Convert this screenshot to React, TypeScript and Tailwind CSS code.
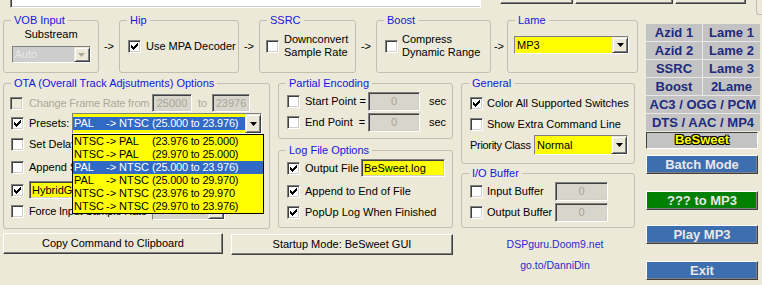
import React from "react";

const SUNKEN =
  "border border-t-[#808080] border-l-[#808080] border-b-white border-r-white shadow-[inset_1px_1px_0_#404040,inset_-1px_-1px_0_#d4d0c8]";
const RAISED =
  "border border-t-white border-l-white border-b-[#404040] border-r-[#404040] shadow-[inset_-1px_-1px_0_#808080]";
const BTN3D =
  "border border-t-[#ece9d8] border-l-[#ece9d8] border-b-[#404040] border-r-[#404040] shadow-[inset_1px_1px_0_#fff,inset_-1px_-1px_0_#808080]";

function Check({ checked = false, disabled = false }: { checked?: boolean; disabled?: boolean }) {
  return (
    <span
      className={`flex h-[13px] w-[13px] shrink-0 items-center justify-center ${SUNKEN} ${
        disabled ? "bg-[#ece9d8]" : "bg-white"
      }`}
    >
      {checked && (
        <svg width="7" height="7" viewBox="0 0 7 7" shapeRendering="crispEdges">
          <path d="M0 2L2 4L6 0H7V2L2 7L0 5Z" fill="#000" />
        </svg>
      )}
    </span>
  );
}

function DropBtn({ disabled = false }: { disabled?: boolean }) {
  return (
    <span className={`flex h-full w-[16px] shrink-0 items-center justify-center bg-[#ece9d8] ${BTN3D}`}>
      <svg width="7" height="4" viewBox="0 0 7 4">
        <path d="M0 0H7L3.5 4Z" fill={disabled ? "#aca899" : "#000"} />
      </svg>
    </span>
  );
}

function Combo({
  className,
  bg,
  disabled,
  children,
}: {
  className: string;
  bg: string;
  disabled?: boolean;
  children?: React.ReactNode;
}) {
  return (
    <div className={`flex shrink-0 ${SUNKEN} ${className}`}>
      <div className={`flex min-w-0 flex-1 items-center overflow-hidden ${bg}`}>{children}</div>
      <DropBtn disabled={disabled} />
    </div>
  );
}

function Field({ className, children }: { className: string; children?: React.ReactNode }) {
  return <div className={`flex shrink-0 items-center overflow-hidden ${SUNKEN} ${className}`}>{children}</div>;
}

function Group({ title, className, children }: { title: string; className: string; children?: React.ReactNode }) {
  return (
    <fieldset className={`shrink-0 rounded-[3px] border border-[#c2bfb0] ${className}`}>
      <legend className="ml-[7px] px-[3px] leading-[13px] text-[#1515e0]">{title}</legend>
      {children}
    </fieldset>
  );
}

function Arrow({ className }: { className: string }) {
  return <div className={`flex shrink-0 items-center justify-center pt-[5px] ${className}`}>-&gt;</div>;
}

function Preset({ a, b, c }: { a: string; b: string; c: string }) {
  return (
    <>
      <span className="inline-block w-[32px] shrink-0">{a}</span>
      <span className="inline-block w-[13px] shrink-0">-&gt;</span>
      <span className="inline-block w-[33px] shrink-0">{b}</span>
      <span className="shrink-0 tracking-[-0.2px]">{c}</span>
    </>
  );
}

const presets = [
  ["NTSC", "PAL", "(23.976 to 25.000)"],
  ["NTSC", "PAL", "(29.970 to 25.000)"],
  ["PAL", "NTSC", "(25.000 to 23.976)"],
  ["PAL", "NTSC", "(25.000 to 29.970)"],
  ["NTSC", "NTSC", "(23.976 to 29.970"],
  ["NTSC", "NTSC", "(29.970 to 23.976)"],
];

function TopStrip() {
  return (
    <div className="flex h-[14px] items-start">
      <div className="ml-[10px] h-[8px] w-[471px] border-b border-l border-r border-b-white border-l-[#808080] border-r-white bg-white shadow-[inset_1px_0_0_#404040,inset_0_-1px_0_#d4d0c8]" />
      <div className={`ml-[19px] h-[4px] w-[73px] border-t-0 bg-[#ece9d8] ${RAISED}`} />
      <div className={`ml-[2px] h-[4px] w-[98px] border-t-0 bg-[#ece9d8] ${RAISED}`} />
      <div className={`ml-[2px] h-[4px] w-[71px] border-t-0 bg-[#ece9d8] ${RAISED}`} />
      <div className="ml-[10px] h-[15px] w-[6px] rounded-bl-[3px] border-b border-l border-[#c2bfb0]" />
    </div>
  );
}

function TopRow() {
  return (
    <div className="flex h-[59px]">
      <Group title="VOB Input" className="ml-[3px] h-[59px] w-[96px]">
        <div className="flex flex-col items-center">
          <div className="mt-[1px]">Substream</div>
          <Combo className="mt-[5px] h-[17px] w-[79px]" bg="bg-[#cdcdcd]" disabled>
            <span className="pl-[2px] text-[#e6e6e6]">Auto</span>
          </Combo>
        </div>
      </Group>
      <Arrow className="w-[20px]" />
      <Group title="Hip" className="h-[59px] w-[120px]">
        <div className="flex h-[46px] items-center pb-[8px] pl-[8px]">
          <Check checked />
          <span className="ml-[5px]">Use MPA Decoder</span>
        </div>
      </Group>
      <Arrow className="w-[20px]" />
      <Group title="SSRC" className="h-[59px] w-[97px]">
        <div className="flex h-[46px] items-center pb-[8px] pl-[6px]">
          <Check />
          <span className="ml-[5px]">
            Downconvert
            <br />
            Sample Rate
          </span>
        </div>
      </Group>
      <Arrow className="w-[20px]" />
      <Group title="Boost" className="h-[59px] w-[115px]">
        <div className="flex h-[46px] items-center pb-[8px] pl-[8px]">
          <Check />
          <span className="ml-[4px]">
            Compress
            <br />
            Dynamic Range
          </span>
        </div>
      </Group>
      <Arrow className="w-[16px]" />
      <Group title="Lame" className="h-[59px] w-[131px]">
        <div className="pl-[6px] pt-[9px]">
          <Combo className="h-[18px] w-[115px]" bg="bg-[#ffff00]">
            <span className="pl-[2px]">MP3</span>
          </Combo>
        </div>
      </Group>
    </div>
  );
}

function OtaGroup() {
  return (
    <Group title="OTA (Overall Track Adjsutments) Options" className="ml-[3px] h-[152px] w-[267px]">
      <div className="mt-[3px] flex h-[20px] items-center pl-[6px]">
        <Check disabled />
        <span className="ml-[6px] w-[123px] shrink-0 tracking-[-0.2px] text-[#aca899]">Change Frame Rate from</span>
        <Field className="h-[18px] w-[40px] justify-center bg-[#d8d5cc] text-[#a8a69a]">25000</Field>
        <span className="ml-[6px] w-[14px] shrink-0 text-[#aca899]">to</span>
        <Field className="h-[18px] w-[38px] justify-center bg-[#d8d5cc] text-[#a8a69a]">23976</Field>
      </div>
      <div className="flex h-[21px] items-center pl-[7px]">
        <Check checked />
        <span className="ml-[5px] w-[43px] shrink-0">Presets:</span>
        <Combo className="h-[21px] w-[190px]" bg="bg-[#ffff00]">
          <div className="flex h-[13px] w-full items-center bg-[#316ac5] pl-[1px] text-white">
            <Preset a="PAL" b="NTSC" c="(25.000 to 23.976)" />
          </div>
        </Combo>
      </div>
      <div className="flex h-[20px] items-center pl-[7px]">
        <Check />
        <span className="ml-[5px]">Set Delay</span>
      </div>
      <div className="mt-[3px] flex h-[20px] items-center pl-[7px]">
        <Check />
        <span className="ml-[5px]">Append Silence</span>
      </div>
      <div className="mt-[3px] flex h-[20px] items-center pl-[7px]">
        <Check checked />
        <Field className="ml-[5px] h-[18px] w-[150px] bg-[#ffff00] pl-[2px]">HybridGUI</Field>
      </div>
      <div className="mt-[1px] flex h-[20px] items-center pl-[7px]">
        <Check />
        <span className="ml-[5px] w-[123px] shrink-0 tracking-[-0.2px]">Force Input Sample Rate</span>
        <Combo className="h-[18px] w-[73px]" bg="bg-[#d8d5cc]" disabled />
      </div>
    </Group>
  );
}

function MiddleColumn() {
  return (
    <div className="ml-[8px] flex w-[175px] shrink-0 flex-col">
      <Group title="Partial Encoding" className="h-[62px]">
        <div className="mt-[1px] flex h-[20px] items-center pl-[8px]">
          <Check />
          <span className="ml-[5px] w-[63px] shrink-0 whitespace-pre">Start Point =</span>
          <Field className="h-[19px] w-[52px] justify-center bg-[#d8d5cc] text-[#a8a69a]">0</Field>
          <span className="ml-[9px]">sec</span>
        </div>
        <div className="mt-[1px] flex h-[20px] items-center pl-[8px]">
          <Check />
          <span className="ml-[5px] w-[63px] shrink-0 whitespace-pre">End Point  =</span>
          <Field className="h-[19px] w-[52px] justify-center bg-[#d8d5cc] text-[#a8a69a]">0</Field>
          <span className="ml-[9px]">sec</span>
        </div>
      </Group>
      <Group title="Log File Options" className="mt-[5px] h-[84px]">
        <div className="mt-[1px] flex h-[20px] items-center pl-[8px]">
          <Check checked />
          <span className="ml-[5px] w-[56px] shrink-0">Output File</span>
          <Field className="h-[18px] w-[84px] bg-[#ffff00] pl-[2px]">BeSweet.log</Field>
        </div>
        <div className="mt-[3px] flex h-[20px] items-center pl-[8px]">
          <Check checked />
          <span className="ml-[5px]">Append to End of File</span>
        </div>
        <div className="mt-[1px] flex h-[20px] items-center pl-[8px]">
          <Check checked />
          <span className="ml-[5px]">PopUp Log When Finished</span>
        </div>
      </Group>
    </div>
  );
}

function RightColumn() {
  return (
    <div className="ml-[8px] flex w-[174px] shrink-0 flex-col">
      <Group title="General" className="h-[87px]">
        <div className="mt-[3px] flex h-[20px] items-center pl-[8px]">
          <Check checked />
          <span className="ml-[4px]">Color All Supported Switches</span>
        </div>
        <div className="mt-[1px] flex h-[20px] items-center pl-[8px]">
          <Check />
          <span className="ml-[4px]">Show Extra Command Line</span>
        </div>
        <div className="mt-[1px] flex h-[20px] items-center pl-[8px]">
          <span className="w-[64px] shrink-0 tracking-[-0.3px]">Priority Class</span>
          <Combo className="h-[20px] w-[94px]" bg="bg-[#ffff00]">
            <span className="pl-[2px]">Normal</span>
          </Combo>
        </div>
      </Group>
      <Group title="I/O Buffer" className="mt-[3px] h-[61px]">
        <div className="mt-[1px] flex h-[20px] items-center pl-[8px]">
          <Check />
          <span className="ml-[4px] w-[68px] shrink-0">Input Buffer</span>
          <Field className="h-[19px] w-[53px] justify-center bg-[#d8d5cc] text-[#a8a69a]">0</Field>
        </div>
        <div className="mt-[1px] flex h-[20px] items-center pl-[8px]">
          <Check />
          <span className="ml-[4px] w-[68px] shrink-0">Output Buffer</span>
          <Field className="h-[19px] w-[53px] justify-center bg-[#d8d5cc] text-[#a8a69a]">0</Field>
        </div>
      </Group>
      <div className="mt-[10px] pl-[14px] text-center text-[10.5px] text-[#2a2ac8]">DSPguru.Doom9.net</div>
      <div className="mt-[8px] pl-[14px] text-center text-[10.5px] text-[#2a2ac8]">go.to/DanniDin</div>
    </div>
  );
}

function Cell({ children }: { children: React.ReactNode }) {
  return <div className="h-[17px] bg-[#c3c3c3] text-center leading-[17px]">{children}</div>;
}

function RightPanel() {
  return (
    <div className="ml-[6px] mt-[10px] flex w-[114px] shrink-0 flex-col text-[13px] font-bold">
      <div className="flex flex-col gap-px bg-[#e8e8e8] text-[#1c2a80]">
        <div className="grid grid-cols-[56px_57px] gap-px">
          <Cell>Azid 1</Cell>
          <Cell>Lame 1</Cell>
          <Cell>Azid 2</Cell>
          <Cell>Lame 2</Cell>
          <Cell>SSRC</Cell>
          <Cell>Lame 3</Cell>
          <Cell>Boost</Cell>
          <Cell>2Lame</Cell>
        </div>
        <Cell>AC3 / OGG / PCM</Cell>
        <Cell>DTS / AAC / MP4</Cell>
      </div>
      <div className="mt-px h-[17px] w-[112px] border border-b-white border-l-[#404040] border-r-white border-t-[#404040] bg-[#c3c3c3] text-center leading-[14px] text-[#ffff00] [text-shadow:1px_1px_0_#000,-1px_-1px_0_#000,1px_-1px_0_#000,-1px_1px_0_#000]">
        BeSweet
      </div>
      <div className={`mt-[6px] h-[19px] w-[112px] bg-[#3d6fb0] text-center leading-[17px] text-[#e8e8e8] ${RAISED}`}>
        Batch Mode
      </div>
      <div className={`mt-[17px] h-[19px] w-[112px] bg-[#008000] text-center leading-[17px] text-[#e8e8e8] ${RAISED}`}>
        ??? to MP3
      </div>
      <div className={`mt-[15px] h-[19px] w-[112px] bg-[#3d6fb0] text-center leading-[17px] text-[#e8e8e8] ${RAISED}`}>
        Play MP3
      </div>
      <div className={`mt-[17px] h-[19px] w-[112px] bg-[#3d6fb0] text-center leading-[17px] text-[#e8e8e8] ${RAISED}`}>
        Exit
      </div>
    </div>
  );
}

export default function App() {
  return (
    <div className="relative h-[285px] w-[762px] overflow-hidden whitespace-nowrap bg-[#ece9d8] font-['Liberation_Sans',Arial,sans-serif] text-[11px] leading-[13px] text-black">
      <TopStrip />
      <div className="flex">
        <div className="w-[640px] shrink-0">
          <TopRow />
          <div className="mt-[4px] flex items-start">
            <div className="flex w-[453px] shrink-0 flex-col">
              <div className="flex items-start">
                <OtaGroup />
                <MiddleColumn />
              </div>
              <div className="mt-[4px] flex items-start">
                <button className={`ml-[3px] h-[21px] w-[220px] shrink-0 bg-[#ece9d8] ${RAISED}`}>
                  Copy Command to Clipboard
                </button>
                <button className={`ml-[8px] mt-px h-[21px] w-[222px] shrink-0 bg-[#ece9d8] ${RAISED}`}>
                  Startup Mode: BeSweet GUI
                </button>
              </div>
            </div>
            <RightColumn />
          </div>
        </div>
        <RightPanel />
      </div>

      {/* open presets dropdown */}
      <div className="absolute left-[72px] top-[134px] w-[192px] border border-black bg-[#ffff00]">
        {presets.map(([a, b, c], i) => (
          <div
            key={i}
            className={`flex h-[13px] items-center pl-[1px] ${i === 2 ? "bg-[#316ac5] text-white" : ""}`}
          >
            <Preset a={a} b={b} c={c} />
          </div>
        ))}
      </div>
    </div>
  );
}
